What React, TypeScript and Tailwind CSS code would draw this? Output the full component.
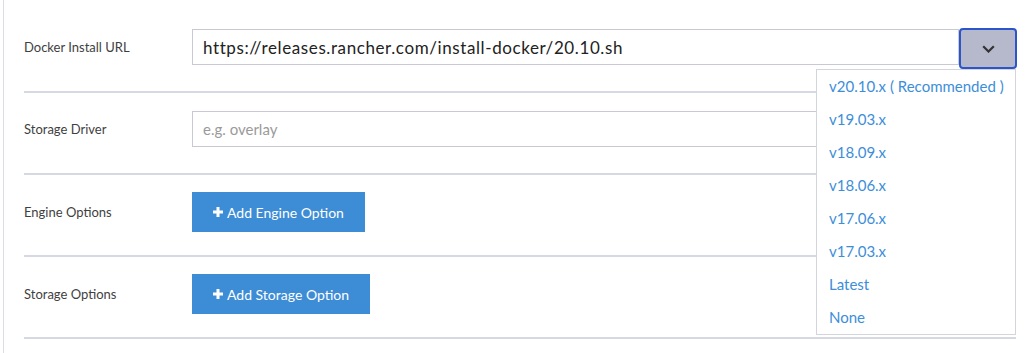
import React from "react";

const versions = [
  "v20.10.x ( Recommended )",
  "v19.03.x",
  "v18.09.x",
  "v18.06.x",
  "v17.06.x",
  "v17.03.x",
  "Latest",
  "None",
];

const PlusIcon = () => (
  <svg width="10" height="10" viewBox="0 0 10 10" className="mr-[4px] shrink-0">
    <path d="M5 0v10M0 5h10" stroke="white" strokeWidth="3" />
  </svg>
);

const Row = ({
  label,
  children,
  pad,
}: {
  label: string;
  children: React.ReactNode;
  pad: string;
}) => (
  <div className={`border-b-2 border-[#d6d9e3] ${pad}`}>
    <div className="flex items-center">
      <div className="w-[168px] shrink-0 pt-[2px] text-[13px] text-[#3f3f3f]">
        {label}
      </div>
      <div className="flex-1">{children}</div>
    </div>
  </div>
);

const AddButton = ({ children }: { children: React.ReactNode }) => (
  <button className="flex h-[40px] items-center bg-[#3d8cd6] pl-[21px] pr-[21px] text-[14px] text-white">
    <PlusIcon />
    {children}
  </button>
);

export default function App() {
  return (
    <div
      className="min-h-[353px] bg-white pl-[3px]"
      style={{ fontFamily: "Lato, 'Open Sans', sans-serif" }}
    >
      <div className="min-h-[353px] border-l border-[#dcdde2] pl-[20px] pr-[16px] pt-[11px]">
        {/* docker install url */}
        <Row label="Docker Install URL" pad="pt-[18px] pb-[26px]">
          <div className="relative flex h-[36px] items-start">
            <input
              readOnly
              value="https://releases.rancher.com/install-docker/20.10.sh"
              className="h-[36px] flex-1 border border-[#c9c9d6] px-[10px] text-[17px] tracking-[0.6px] text-[#222] outline-none"
            />
            <button className="-mr-px -mt-px flex h-[41px] w-[58px] shrink-0 items-center justify-center rounded-[4px] border-2 border-[#2a56c9] bg-[#b6b8cc]">
              <svg width="13" height="8" viewBox="0 0 13 8">
                <path
                  d="M1.2 1.2l5.3 5.3 5.3-5.3"
                  fill="none"
                  stroke="#333"
                  strokeWidth="2.2"
                />
              </svg>
            </button>

            {/* version menu */}
            <div className="absolute right-0 top-[40px] z-10 w-[200px] border border-[#d3d4dc] bg-white">
              {versions.map((v) => (
                <div
                  key={v}
                  className="flex h-[33px] items-center whitespace-nowrap px-[12px] text-[15px] text-[#3d8ed9]"
                >
                  {v}
                </div>
              ))}
            </div>
          </div>
        </Row>

        {/* storage driver */}
        <Row label="Storage Driver" pad="pt-[18px] pb-[26px]">
          <input
            placeholder="e.g. overlay"
            className="h-[36px] w-full border border-[#c9c9d6] px-[10px] text-[15px] text-[#222] outline-none placeholder:text-[#9a9a9a]"
          />
        </Row>

        {/* engine options */}
        <Row label="Engine Options" pad="pt-[17px] pb-[23px]">
          <div className="flex">
            <AddButton>Add Engine Option</AddButton>
          </div>
        </Row>

        {/* storage options */}
        <Row label="Storage Options" pad="pt-[17px] pb-[23px]">
          <div className="flex">
            <AddButton>Add Storage Option</AddButton>
          </div>
        </Row>
      </div>
    </div>
  );
}
